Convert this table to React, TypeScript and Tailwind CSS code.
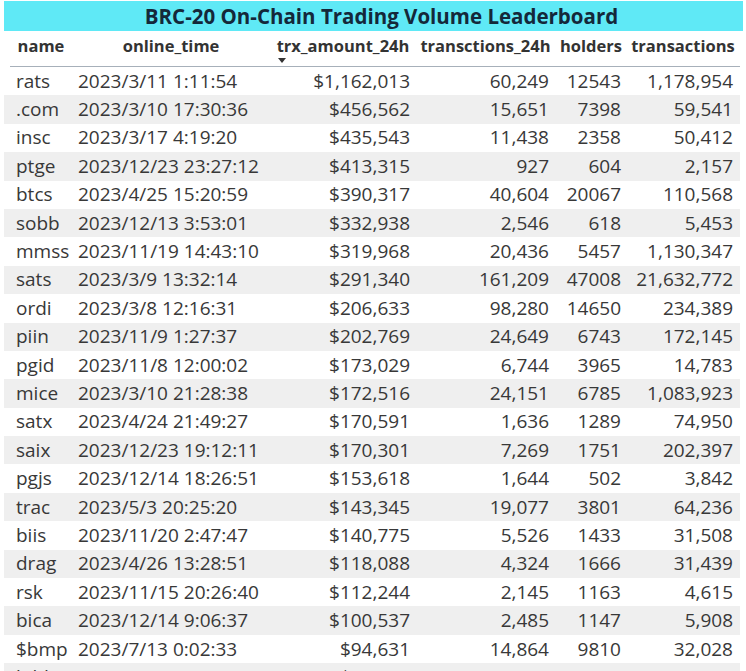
import React from "react";

type Row = [string, string, string, string, string, string];

const rows: Row[] = [
  ["rats", "2023/3/11 1:11:54", "$1,162,013", "60,249", "12543", "1,178,954"],
  [".com", "2023/3/10 17:30:36", "$456,562", "15,651", "7398", "59,541"],
  ["insc", "2023/3/17 4:19:20", "$435,543", "11,438", "2358", "50,412"],
  ["ptge", "2023/12/23 23:27:12", "$413,315", "927", "604", "2,157"],
  ["btcs", "2023/4/25 15:20:59", "$390,317", "40,604", "20067", "110,568"],
  ["sobb", "2023/12/13 3:53:01", "$332,938", "2,546", "618", "5,453"],
  ["mmss", "2023/11/19 14:43:10", "$319,968", "20,436", "5457", "1,130,347"],
  ["sats", "2023/3/9 13:32:14", "$291,340", "161,209", "47008", "21,632,772"],
  ["ordi", "2023/3/8 12:16:31", "$206,633", "98,280", "14650", "234,389"],
  ["piin", "2023/11/9 1:27:37", "$202,769", "24,649", "6743", "172,145"],
  ["pgid", "2023/11/8 12:00:02", "$173,029", "6,744", "3965", "14,783"],
  ["mice", "2023/3/10 21:28:38", "$172,516", "24,151", "6785", "1,083,923"],
  ["satx", "2023/4/24 21:49:27", "$170,591", "1,636", "1289", "74,950"],
  ["saix", "2023/12/23 19:12:11", "$170,301", "7,269", "1751", "202,397"],
  ["pgjs", "2023/12/14 18:26:51", "$153,618", "1,644", "502", "3,842"],
  ["trac", "2023/5/3 20:25:20", "$143,345", "19,077", "3801", "64,236"],
  ["biis", "2023/11/20 2:47:47", "$140,775", "5,526", "1433", "31,508"],
  ["drag", "2023/4/26 13:28:51", "$118,088", "4,324", "1666", "31,439"],
  ["rsk", "2023/11/15 20:26:40", "$112,244", "2,145", "1163", "4,615"],
  ["bica", "2023/12/14 9:06:37", "$100,537", "2,485", "1147", "5,908"],
  ["$bmp", "2023/7/13 0:02:33", "$94,631", "14,864", "9810", "32,028"],
  ["bild", "2023/12/4 8:15:09", "$87,412", "3,918", "2210", "12,804"],
];

const headers = ["name", "online_time", "trx_amount_24h", "transctions_24h", "holders", "transactions"];

export default function App() {
  return (
    <div className="h-[671px] w-[746px] overflow-hidden bg-white font-['Open_Sans',sans-serif] text-[#333]">
      <div className="ml-[4px] mr-[3px] mt-[1px] flex h-[30px] items-center justify-center bg-[#5fe9f6] pl-[16px] text-[20.5px] font-bold text-[#14283a]">
        BRC-20 On-Chain Trading Volume Leaderboard
      </div>

      <div className="ml-[4px] w-[736px]">
        <div className="ml-[6px] grid h-[36px] grid-cols-[62px_198px_146px_139px_72px_112px] border-b-[1.5px] border-[#a7b0ba]">
          {headers.map((h) => (
            <div key={h} className="flex justify-center pt-[3px]">
              <div className="flex flex-col items-start">
                <span className="text-[16.5px] font-bold leading-[23px]">{h}</span>
                {h === "trx_amount_24h" && (
                  <span className="ml-[1px] mt-[1px] h-0 w-0 border-x-[4px] border-t-[5px] border-x-transparent border-t-[#333]" />
                )}
              </div>
            </div>
          ))}
        </div>

        {rows.map((r, i) => (
          <div
            key={r[0]}
            className={
              "grid h-[28.4px] grid-cols-[68px_198px_146px_139px_72px_112px] items-center text-[19px] leading-none whitespace-nowrap text-[#383838] " +
              (i % 2 === 1 ? "bg-[#efefef]" : "bg-white")
            }
          >
            <div className="pl-[12px]">{r[0]}</div>
            <div className="pl-[6px]">{r[1]}</div>
            <div className="pr-[6px] text-right">{r[2]}</div>
            <div className="pr-[6px] text-right">{r[3]}</div>
            <div className="pr-[6px] text-right">{r[4]}</div>
            <div className="pr-[6px] text-right">{r[5]}</div>
          </div>
        ))}
      </div>
    </div>
  );
}
